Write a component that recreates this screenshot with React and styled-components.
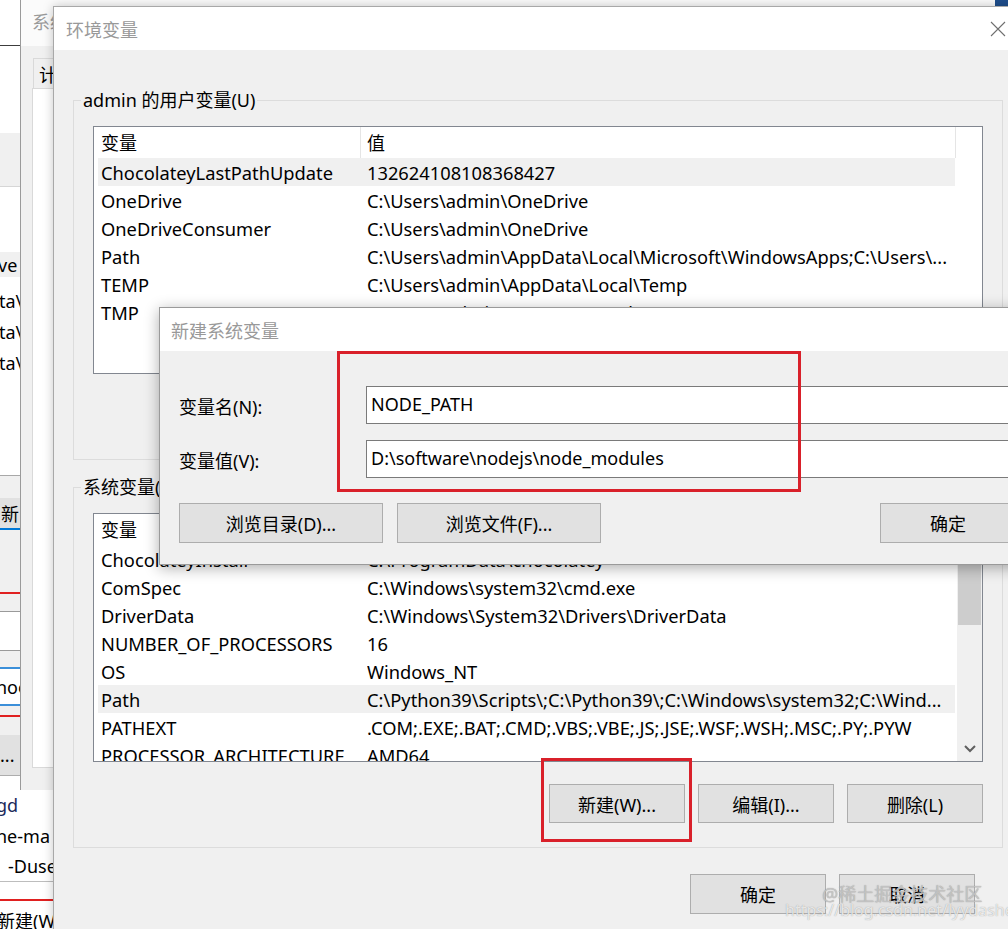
import React from 'react';
import styled, { createGlobalStyle } from 'styled-components';

const FONT = '"Noto Sans", "Noto Sans CJK SC", sans-serif';

const GlobalStyle = createGlobalStyle`
  html, body { margin: 0; padding: 0; }
  body {
    font-family: ${FONT};
    font-size: 18px;
    color: #000;
    background: #f0f0f0;
  }
  * { box-sizing: border-box; }
`;

const Desktop = styled.div`
  position: relative;
  width: 1008px;
  height: 929px;
  overflow: hidden;
  background: #f0f0f0;
`;

/* ---------- far left window (mostly hidden) ---------- */

const FarWindow = styled.div`
  position: absolute;
  left: 0;
  top: 0;
  width: 60px;
  height: 929px;
  background: #fff;
  display: flex;
  flex-direction: column;
  overflow: hidden;
`;

const Strip = styled.div`
  flex: none;
  height: ${p => p.$h}px;
  background: ${p => p.$bg || '#fff'};
  border-bottom: ${p => (p.$line ? `${p.$lw || 1}px solid ${p.$line}` : 'none')};
  box-sizing: content-box;
  display: flex;
  align-items: ${p => (p.$top ? 'flex-start' : 'center')};
  padding-top: ${p => (p.$top ? 6 : 0)}px;
  white-space: nowrap;
  color: ${p => p.$color || '#000'};
`;

const FarText = styled.span`
  margin-left: ${p => p.$x}px;
`;

const farStrips = [
  { h: 45, line: '#3c3c3c' },
  { h: 87 },
  { h: 53, bg: '#f0f0f0', line: '#d6d6d6' },
  { h: 65 },
  { h: 25, bg: '#f0f0f0', text: 've', x: -2 },
  { h: 8 },
  { h: 31, text: 'ta\\', x: -1 },
  { h: 31, text: 'ta\\', x: -1 },
  { h: 31, text: 'ta\\', x: -1 },
  { h: 97, line: '#a8a8a8' },
  { h: 22, bg: '#f0f0f0' },
  { h: 30, bg: '#e1e1e1', line: '#0078d7', lw: 2, text: '新', x: 1 },
  { h: 62, bg: '#f0f0f0' },
  { h: 2, bg: '#e02020' },
  { h: 17, bg: '#f0f0f0', line: '#9a9a9a' },
  { h: 38, line: '#9a9a9a' },
  { h: 16, bg: '#f0f0f0' },
  { h: 2, bg: '#3b8fd9' },
  { h: 35, text: 'hoo', x: -4 },
  { h: 2, bg: '#3b8fd9' },
  { h: 9, bg: '#f0f0f0' },
  { h: 2, bg: '#e02020' },
  { h: 18, bg: '#f0f0f0' },
  { h: 40, bg: '#e1e1e1', line: '#adadad', text: '...', x: 0 },
  { h: 14 },
  { h: 30, text: 'gd', x: -4, color: '#1b2a5a' },
  { h: 31, text: 'he-ma', x: -4 },
  { h: 30, text: '-Duse', x: 8, line: '#bdbdbd' },
  { h: 17 },
  { h: 2, bg: '#e02020' },
  { h: 40, text: '新建(W)...', x: -3, top: true },
];

/* ---------- 系统属性 window ---------- */

const SysPropWindow = styled.div`
  position: absolute;
  left: 20px;
  top: -4px;
  width: 988px;
  height: 794px;
  background: #f0f0f0;
  border-left: 1px solid #9a9a9a;
  display: flex;
  flex-direction: column;
`;

const PlainTitleBar = styled.div`
  flex: none;
  height: 50px;
  background: #fbfbfb;
  display: flex;
  align-items: center;
  justify-content: space-between;
  padding-left: 11px;
  color: #9a9a9a;
`;

const TopCorner = styled.span`
  align-self: flex-start;
  width: 13px;
  height: 14px;
  background: #1f4e8c;
`;

const SysPropBody = styled.div`
  flex: 1;
  padding: 12px 0 22px 11px;
  display: flex;
  flex-direction: column;
`;

const Tab = styled.div`
  align-self: flex-start;
  height: 30px;
  margin-left: 1px;
  padding: 0 5px;
  border: 1px solid #d9d9d9;
  border-bottom: none;
  display: flex;
  align-items: center;
`;

const TabPanel = styled.div`
  flex: 1;
  background: #fff;
  border: 1px solid #d9d9d9;
`;

/* ---------- 环境变量 window ---------- */

const EnvWindow = styled.div`
  position: absolute;
  left: 53px;
  top: 6px;
  width: 969px;
  height: 935px;
  background: #f0f0f0;
  border: 1px solid #a8a8a8;
  box-shadow: 0 0 10px rgba(0, 0, 0, 0.22);
  display: flex;
  flex-direction: column;
`;

const TitleBar = styled.div`
  flex: none;
  height: 43px;
  background: #fff;
  display: flex;
  align-items: center;
  justify-content: space-between;
  padding: 0 15px 0 12px;
  color: #999;
`;

const EnvBody = styled.div`
  display: flex;
  flex-direction: column;
  padding: 0 18px 0 19px;
`;

const GroupBox = styled.fieldset`
  margin: ${p => p.$mt}px 0 0 0;
  padding: 14px 19px 24px 19px;
  border: 1px solid #dcdcdc;
  min-width: 0;
  display: flex;
  flex-direction: column;
`;

const Legend = styled.legend`
  margin-left: -12px;
  padding: 0 2px;
  line-height: 24px;
  font-size: 18px;
`;

const ListBox = styled.div`
  height: ${p => p.$h}px;
  background: #fff;
  border: 1px solid #828790;
  display: flex;
  overflow: hidden;
  font-size: 18.3px;
`;

const ListMain = styled.div`
  flex: 1;
  min-width: 0;
  display: flex;
  flex-direction: column;
`;

const HeaderRow = styled.div`
  flex: none;
  height: 31px;
  display: flex;
`;

const HeadCell = styled.div`
  width: ${p => p.$w}px;
  padding-left: ${p => p.$pad}px;
  border-right: 1px solid #e5e5e5;
  display: flex;
  align-items: center;
  line-height: 1;
  font-size: 18px;
`;

const Row = styled.div`
  flex: none;
  height: 28px;
  width: 857px;
  margin-left: 4px;
  display: grid;
  grid-template-columns: 269px 1fr;
  align-items: center;
  background: ${p => (p.$selected ? '#f0f0f0' : 'transparent')};
  white-space: nowrap;
`;

const NameCell = styled.span`
  padding-left: 3px;
  overflow: hidden;
`;

const ValueCell = styled.span`
  overflow: hidden;
`;

const ScrollBar = styled.div`
  flex: none;
  width: 25px;
  background: #f0f0f0;
  display: flex;
  flex-direction: column;
`;

const ScrollArrow = styled.div`
  flex: none;
  height: 25px;
  display: flex;
  align-items: center;
  justify-content: center;
`;

const Thumb = styled.div`
  flex: none;
  height: 60px;
  margin: 26px 1px 0;
  background: #cdcdcd;
`;

const ScrollTrack = styled.div`
  flex: 1;
`;

const ButtonRow = styled.div`
  display: flex;
  justify-content: flex-end;
  gap: ${p => p.$gap || 13}px;
  margin-top: ${p => p.$mt || 0}px;
  padding-right: ${p => p.$pr || 0}px;
`;

const Button = styled.div`
  flex: none;
  width: ${p => p.$w || 136}px;
  height: ${p => p.$h || 39}px;
  margin-left: ${p => (p.$push ? 'auto' : '0')};
  background: #e1e1e1;
  border: 1px solid #adadad;
  display: flex;
  align-items: center;
  justify-content: center;
  font-size: 18px;
  white-space: nowrap;
`;

const Marked = styled.div`
  position: relative;
  flex: none;

  &::after {
    content: '';
    position: absolute;
    top: -26px;
    left: -8px;
    right: -7px;
    bottom: -19px;
    border: 3px solid #d9202a;
    pointer-events: none;
  }
`;

/* ---------- 新建系统变量 dialog ---------- */

const NewDialog = styled.div`
  position: absolute;
  left: 159px;
  top: 307px;
  width: 900px;
  height: 258px;
  background: #f0f0f0;
  border: 1px solid #9a9a9a;
  box-shadow: 0 3px 14px rgba(0, 0, 0, 0.32);
  display: flex;
  flex-direction: column;
`;

const DialogTitle = styled.div`
  flex: none;
  height: 43px;
  background: #fff;
  display: flex;
  align-items: center;
  padding-left: 11px;
  color: #999;
`;

const DialogBody = styled.div`
  position: relative;
  flex: 1;
  display: flex;
  flex-direction: column;
  padding: 35px 42px 0 19px;
`;

const FieldRow = styled.div`
  display: flex;
  align-items: center;
  height: 38px;
  margin-top: ${p => p.$mt || 0}px;
`;

const FieldLabel = styled.label`
  flex: none;
  width: 187px;
  padding-top: 1px;
`;

const TextBox = styled.div`
  flex: 1;
  height: 38px;
  background: #fff;
  border: 1px solid #7a7a7a;
  display: flex;
  align-items: center;
  padding: 0 0 3px 4px;
  white-space: nowrap;
`;

const RedFrame = styled.div`
  position: absolute;
  left: 177px;
  top: 0;
  width: 464px;
  height: 141px;
  border: 3px solid #d9202a;
  pointer-events: none;
`;

/* ---------- watermark ---------- */

const Watermark = styled.div`
  position: absolute;
  left: ${p => p.$x}px;
  top: ${p => p.$y}px;
  font-size: ${p => p.$size}px;
  color: ${p => p.$color};
  text-shadow: 0 0 1px rgba(110, 110, 110, 0.7);
  white-space: nowrap;
  pointer-events: none;
`;

const CloseIcon = () => (
  <svg width="16" height="16" viewBox="0 0 16 16">
    <path d="M1 1 L15 15 M15 1 L1 15" stroke="#6f6f6f" strokeWidth="1.1" fill="none" />
  </svg>
);

const ChevronDown = () => (
  <svg width="12" height="8" viewBox="0 0 12 8">
    <polyline points="1,1 6,6 11,1" stroke="#606060" strokeWidth="2" fill="none" />
  </svg>
);

const ChevronUp = () => (
  <svg width="12" height="8" viewBox="0 0 12 8">
    <polyline points="1,7 6,2 11,7" stroke="#606060" strokeWidth="2" fill="none" />
  </svg>
);

const userVars = [
  ['ChocolateyLastPathUpdate', '132624108108368427', true],
  ['OneDrive', 'C:\\Users\\admin\\OneDrive'],
  ['OneDriveConsumer', 'C:\\Users\\admin\\OneDrive'],
  ['Path', 'C:\\Users\\admin\\AppData\\Local\\Microsoft\\WindowsApps;C:\\Users\\...'],
  ['TEMP', 'C:\\Users\\admin\\AppData\\Local\\Temp'],
  ['TMP', 'C:\\Users\\admin\\AppData\\Local\\Temp'],
];

const sysVars = [
  ['ChocolateyInstall', 'C:\\ProgramData\\chocolatey'],
  ['ComSpec', 'C:\\Windows\\system32\\cmd.exe'],
  ['DriverData', 'C:\\Windows\\System32\\Drivers\\DriverData'],
  ['NUMBER_OF_PROCESSORS', '16'],
  ['OS', 'Windows_NT'],
  ['Path', 'C:\\Python39\\Scripts\\;C:\\Python39\\;C:\\Windows\\system32;C:\\Wind...', true],
  ['PATHEXT', '.COM;.EXE;.BAT;.CMD;.VBS;.VBE;.JS;.JSE;.WSF;.WSH;.MSC;.PY;.PYW'],
  ['PROCESSOR_ARCHITECTURE', 'AMD64'],
];

const VarList = ({ vars, height, scroll }) => (
  <ListBox $h={height}>
    <ListMain>
      <HeaderRow>
        <HeadCell $w={267} $pad={7}>变量</HeadCell>
        <HeadCell $w={595} $pad={6}>值</HeadCell>
      </HeaderRow>
      {vars.map(([name, value, selected]) => (
        <Row key={name} $selected={selected}>
          <NameCell>{name}</NameCell>
          <ValueCell>{value}</ValueCell>
        </Row>
      ))}
    </ListMain>
    {scroll && (
      <ScrollBar>
        <ScrollArrow>
          <ChevronUp />
        </ScrollArrow>
        <Thumb />
        <ScrollTrack />
        <ScrollArrow>
          <ChevronDown />
        </ScrollArrow>
      </ScrollBar>
    )}
  </ListBox>
);

const App = () => (
  <Desktop>
    <GlobalStyle />

    <FarWindow>
      {farStrips.map((s, i) => (
        <Strip key={i} $h={s.h} $bg={s.bg} $line={s.line} $lw={s.lw} $top={s.top} $color={s.color}>
          {s.text && <FarText $x={s.x}>{s.text}</FarText>}
        </Strip>
      ))}
    </FarWindow>

    <SysPropWindow>
      <PlainTitleBar>
        系统属性
        <TopCorner />
      </PlainTitleBar>
      <SysPropBody>
        <Tab>计算机名</Tab>
        <TabPanel />
      </SysPropBody>
    </SysPropWindow>

    <EnvWindow>
      <TitleBar>
        环境变量
        <CloseIcon />
      </TitleBar>
      <EnvBody>
        <GroupBox $mt={38}>
          <Legend>admin 的用户变量(U)</Legend>
          <VarList vars={userVars} height={248} />
          <ButtonRow $mt={22}>
            <Button>新建(N)...</Button>
            <Button>编辑(E)...</Button>
            <Button>删除(D)</Button>
          </ButtonRow>
        </GroupBox>

        <GroupBox $mt={15}>
          <Legend>系统变量(S)</Legend>
          <VarList vars={sysVars} height={249} scroll />
          <ButtonRow $mt={22}>
            <Marked>
              <Button>新建(W)...</Button>
            </Marked>
            <Button>编辑(I)...</Button>
            <Button>删除(L)</Button>
          </ButtonRow>
        </GroupBox>

        <ButtonRow $mt={26} $pr={28}>
          <Button $h={40}>确定</Button>
          <Button $h={40}>取消</Button>
        </ButtonRow>
      </EnvBody>
    </EnvWindow>

    <NewDialog>
      <DialogTitle>新建系统变量</DialogTitle>
      <DialogBody>
        <FieldRow>
          <FieldLabel>变量名(N):</FieldLabel>
          <TextBox>NODE_PATH</TextBox>
        </FieldRow>
        <FieldRow $mt={16}>
          <FieldLabel>变量值(V):</FieldLabel>
          <TextBox>D:\software\nodejs\node_modules</TextBox>
        </FieldRow>
        <ButtonRow $mt={25} $gap={14}>
          <Button $w={204} $h={40}>浏览目录(D)...</Button>
          <Button $w={204} $h={40}>浏览文件(F)...</Button>
          <Button $h={40} $push>确定</Button>
        </ButtonRow>
        <RedFrame />
      </DialogBody>
    </NewDialog>

    <Watermark $x={822} $y={880} $size={18} $color="rgba(205, 205, 205, 0.8)">
      @稀土掘金技术社区
    </Watermark>
    <Watermark $x={785} $y={899} $size={16} $color="rgba(255, 255, 255, 0.75)">
      https://blog.csdn.net/lyydashen
    </Watermark>
  </Desktop>
);

export default App;
